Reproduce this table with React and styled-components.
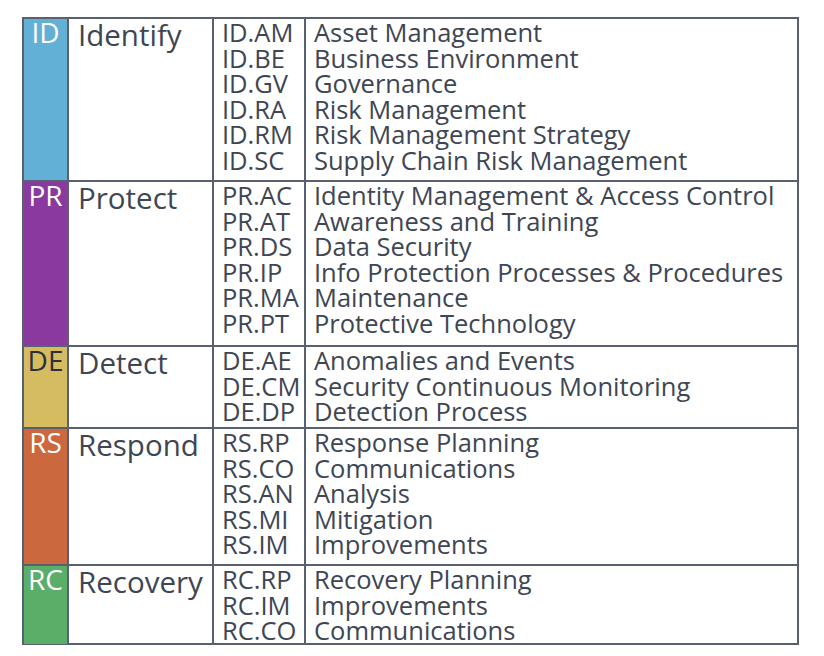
import React from "react";
import styled, { createGlobalStyle } from "styled-components";

const functions = [
  {
    code: "ID",
    name: "Identify",
    color: "#63b0d6",
    ink: "#ffffff",
    height: 161,
    items: [
      ["ID.AM", "Asset Management"],
      ["ID.BE", "Business Environment"],
      ["ID.GV", "Governance"],
      ["ID.RA", "Risk Management"],
      ["ID.RM", "Risk Management Strategy"],
      ["ID.SC", "Supply Chain Risk Management"],
    ],
  },
  {
    code: "PR",
    name: "Protect",
    color: "#8a3a9e",
    ink: "#ffffff",
    height: 163,
    items: [
      ["PR.AC", "Identity Management & Access Control"],
      ["PR.AT", "Awareness and Training"],
      ["PR.DS", "Data Security"],
      ["PR.IP", "Info Protection Processes & Procedures"],
      ["PR.MA", "Maintenance"],
      ["PR.PT", "Protective Technology"],
    ],
  },
  {
    code: "DE",
    name: "Detect",
    color: "#d5bc60",
    ink: "#2b303a",
    height: 80,
    items: [
      ["DE.AE", "Anomalies and Events"],
      ["DE.CM", "Security Continuous Monitoring"],
      ["DE.DP", "Detection Process"],
    ],
  },
  {
    code: "RS",
    name: "Respond",
    color: "#cb683d",
    ink: "#ffffff",
    height: 135,
    items: [
      ["RS.RP", "Response Planning"],
      ["RS.CO", "Communications"],
      ["RS.AN", "Analysis"],
      ["RS.MI", "Mitigation"],
      ["RS.IM", "Improvements"],
    ],
  },
  {
    code: "RC",
    name: "Recovery",
    color: "#5aae68",
    ink: "#ffffff",
    height: 77,
    items: [
      ["RC.RP", "Recovery Planning"],
      ["RC.IM", "Improvements"],
      ["RC.CO", "Communications"],
    ],
  },
];

const GlobalStyle = createGlobalStyle`
  html, body {
    margin: 0;
    padding: 0;
    background: #ffffff;
  }
  body {
    font-family: "Open Sans", "Liberation Sans", sans-serif;
    color: #3e4654;
  }
`;

const Page = styled.div`
  padding: 17px 0 0 22px;
`;

const Table = styled.div`
  width: 773px;
  border: 2px solid #596170;
  display: flex;
  flex-direction: column;
`;

const Row = styled.div`
  display: grid;
  grid-template-columns: 43px 145px 92px 1fr;
  height: ${(p) => p.$height}px;
  & + & {
    border-top: 2px solid #596170;
  }
`;

const Label = styled.div`
  background: ${(p) => p.$color};
  color: ${(p) => p.$ink};
  font-size: 28px;
  line-height: 24px;
  text-align: center;
  padding-top: 1px;
`;

const Category = styled.div`
  border-left: 2px solid #596170;
  padding-left: 9px;
  font-size: 29.5px;
  line-height: 32px;
`;

const Lines = styled.div`
  border-left: 2px solid #596170;
  padding: 1px 0 0 8px;
  display: flex;
  flex-direction: column;
  font-size: 25.5px;
  line-height: 25.6px;
  white-space: nowrap;
`;

const Line = styled.span``;

export default function App() {
  return (
    <>
      <GlobalStyle />
      <Page>
        <Table>
          {functions.map((fn) => (
            <Row key={fn.code} $height={fn.height}>
              <Label $color={fn.color} $ink={fn.ink}>
                {fn.code}
              </Label>
              <Category>{fn.name}</Category>
              <Lines>
                {fn.items.map(([code]) => (
                  <Line key={code}>{code}</Line>
                ))}
              </Lines>
              <Lines>
                {fn.items.map(([code, text]) => (
                  <Line key={code}>{text}</Line>
                ))}
              </Lines>
            </Row>
          ))}
        </Table>
      </Page>
    </>
  );
}
